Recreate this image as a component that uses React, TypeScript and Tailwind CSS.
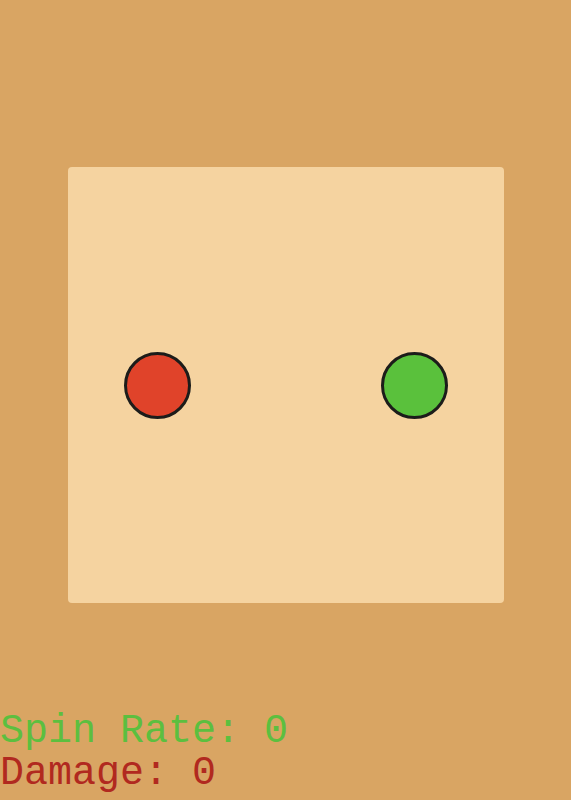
export default function App() {
  return (
    <div className="flex h-[800px] w-full flex-col overflow-hidden bg-[#d9a563]">
      {/* arena */}
      <div className="mx-auto mt-[167px] flex h-[436px] w-[436px] items-center justify-between rounded-[4px] bg-[#f5d3a0] px-[56px]">
        <div className="h-[67px] w-[67px] rounded-full border-[3.5px] border-[#1c1c1a] bg-[#e0432a]" />
        <div className="h-[67px] w-[67px] rounded-full border-[3.5px] border-[#1c1c1a] bg-[#5ac13c]" />
      </div>

      {/* stats */}
      <div className="mt-[108px] font-['Liberation_Mono','Courier_New',monospace] text-[40px] leading-[42px] whitespace-pre">
        <div className="text-[#5cbf3f]">Spin Rate: 0</div>
        <div className="text-[#b1291f]">Damage: 0</div>
      </div>
    </div>
  );
}
